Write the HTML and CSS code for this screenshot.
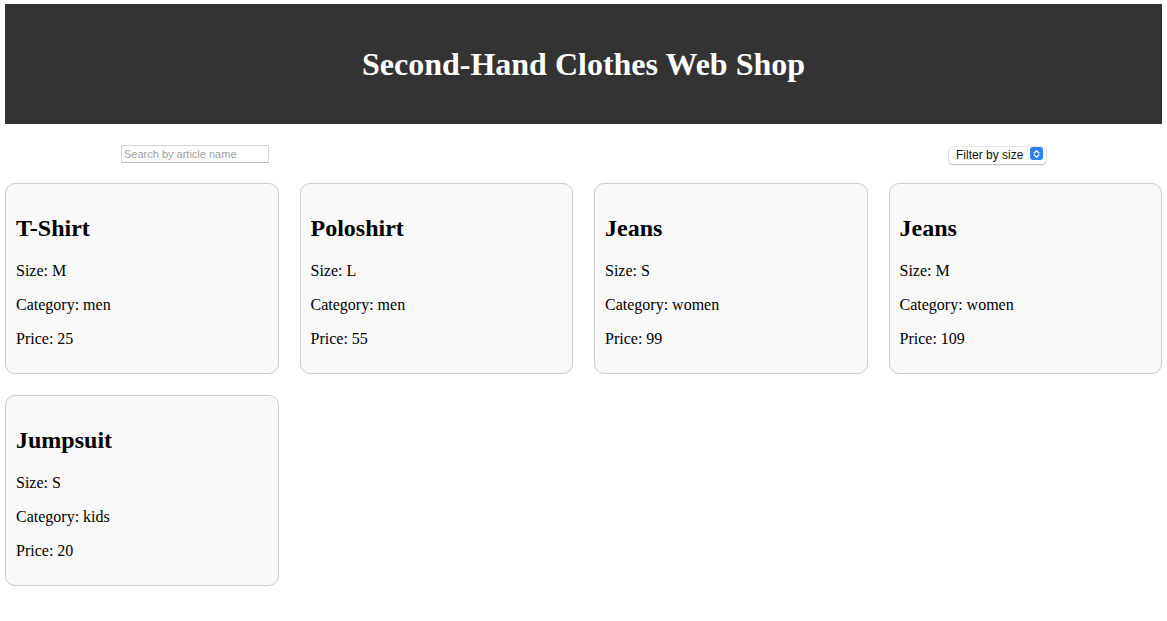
FILE: index.html
```html
<!DOCTYPE html>
<html>
<head>
<meta charset="utf-8">
<title>Second-Hand Clothes Web Shop</title>
<link rel="stylesheet" href="styles.css">
</head>
<body>
<header class="site-header">
  <h1 class="site-title">Second-Hand Clothes Web Shop</h1>
</header>
<div class="controls">
  <input class="search" type="text" placeholder="Search by article name">
  <div class="select-wrap">
    <select class="size-select">
      <option>Filter by size</option>
      <option>S</option>
      <option>M</option>
      <option>L</option>
    </select>
    <span class="select-btn">
      <svg width="9" height="10" viewBox="0 0 9 10"><path d="M2.2 4 L4.5 1.8 L6.8 4 M2.2 6 L4.5 8.2 L6.8 6" fill="none" stroke="#fff" stroke-width="1.3" stroke-linecap="round" stroke-linejoin="round"/></svg>
    </span>
  </div>
</div>
<main class="grid">
  <div class="card"><h2>T-Shirt</h2><p>Size: M</p><p>Category: men</p><p>Price: 25</p></div>
  <div class="card"><h2>Poloshirt</h2><p>Size: L</p><p>Category: men</p><p>Price: 55</p></div>
  <div class="card"><h2>Jeans</h2><p>Size: S</p><p>Category: women</p><p>Price: 99</p></div>
  <div class="card"><h2>Jeans</h2><p>Size: M</p><p>Category: women</p><p>Price: 109</p></div>
  <div class="card"><h2>Jumpsuit</h2><p>Size: S</p><p>Category: kids</p><p>Price: 20</p></div>
</main>
</body>
</html>
```

FILE: styles.css
```css
body {
  margin: 4px 5px;
  font-family: "Liberation Serif", "Times New Roman", serif;
  color: #000;
  background: #fff;
}

.site-header {
  background: #333;
  height: 120px;
  display: flex;
  align-items: center;
  justify-content: center;
}

.site-title {
  margin: 0;
  color: #fff;
  font-size: 32px;
  font-weight: bold;
}

.controls {
  display: flex;
  justify-content: space-between;
  align-items: flex-start;
  padding: 20px 116px 0;
  height: 59px;
  box-sizing: border-box;
}

.search {
  width: 148px;
  height: 18px;
  box-sizing: border-box;
  border: 1px solid #d6d6d6;
  border-bottom-color: #bdbdbd;
  padding: 0 2px;
  font-family: "Liberation Sans", Arial, sans-serif;
  font-size: 11px;
  margin: 1px 0 0;
  outline: none;
}

.search::placeholder {
  color: #a0a0a0;
}

.select-wrap {
  position: relative;
  width: 97px;
  height: 17px;
  margin-top: 1px;
}

.size-select {
  -webkit-appearance: none;
  appearance: none;
  width: 97px;
  height: 17px;
  box-sizing: border-box;
  border: none;
  border-radius: 4px;
  background: #fff;
  box-shadow: 0 0 0 0.5px rgba(0,0,0,0.18), 0 1px 1.5px rgba(0,0,0,0.2);
  font-family: "Liberation Sans", Arial, sans-serif;
  font-size: 12px;
  color: #111;
  padding: 0 0 0 7px;
  margin: 0;
}

.select-btn {
  position: absolute;
  right: 3px;
  top: 2px;
  width: 13px;
  height: 13px;
  border-radius: 3px;
  background: #2f7ff5;
  display: flex;
  align-items: center;
  justify-content: center;
  pointer-events: none;
}

.grid {
  display: grid;
  grid-template-columns: repeat(4, 1fr);
  gap: 21px;
}

.card {
  border: 1px solid #ccc;
  border-radius: 10px;
  background: #f9f9f9;
  padding: 11px 10px 9px;
}

.card h2 {
  font-size: 24px;
  margin: 20px 0 20px;
}

.card p {
  font-size: 16px;
  margin: 16px 0;
}
```
